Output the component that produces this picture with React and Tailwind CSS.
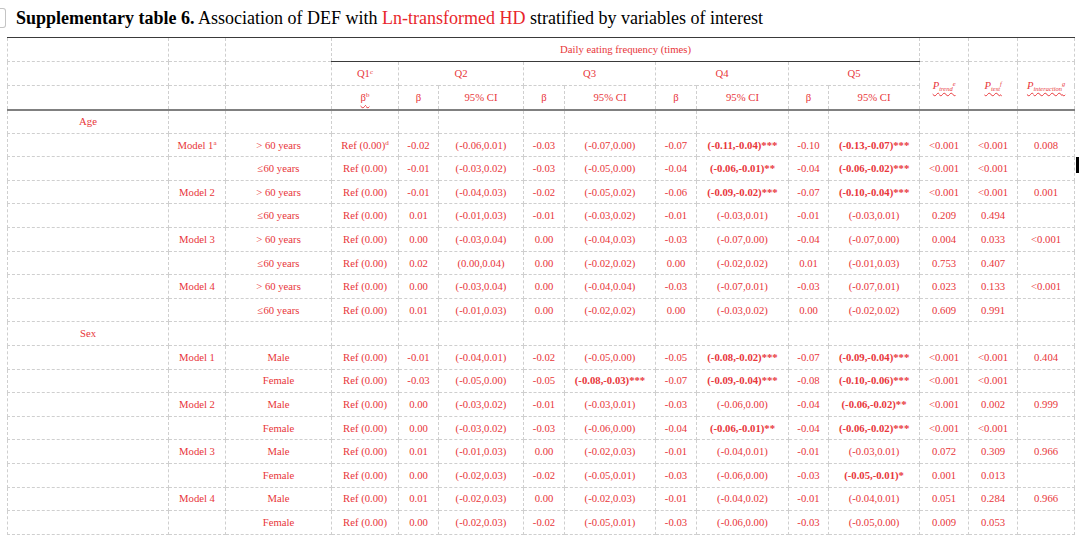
const rows = [
  { group: "Age" },
  { model: "Model 1", sup: "a", sub: "> 60 years", refSup: "d", v: ["-0.02", "(-0.06,0.01)", "-0.03", "(-0.07,0.00)", "-0.07", "!(-0.11,-0.04)***", "-0.10", "!(-0.13,-0.07)***", "<0.001", "<0.001", "0.008"] },
  { sub: "≤60 years", v: ["-0.01", "(-0.03,0.02)", "-0.03", "(-0.05,0.00)", "-0.04", "!(-0.06,-0.01)**", "-0.04", "!(-0.06,-0.02)***", "<0.001", "<0.001", ""] },
  { model: "Model 2", sub: "> 60 years", v: ["-0.01", "(-0.04,0.03)", "-0.02", "(-0.05,0.02)", "-0.06", "!(-0.09,-0.02)***", "-0.07", "!(-0.10,-0.04)***", "<0.001", "<0.001", "0.001"] },
  { sub: "≤60 years", v: ["0.01", "(-0.01,0.03)", "-0.01", "(-0.03,0.02)", "-0.01", "(-0.03,0.01)", "-0.01", "(-0.03,0.01)", "0.209", "0.494", ""] },
  { model: "Model 3", sub: "> 60 years", v: ["0.00", "(-0.03,0.04)", "0.00", "(-0.04,0.03)", "-0.03", "(-0.07,0.00)", "-0.04", "(-0.07,0.00)", "0.004", "0.033", "<0.001"] },
  { sub: "≤60 years", v: ["0.02", "(0.00,0.04)", "0.00", "(-0.02,0.02)", "0.00", "(-0.02,0.02)", "0.01", "(-0.01,0.03)", "0.753", "0.407", ""] },
  { model: "Model 4", sub: "> 60 years", v: ["0.00", "(-0.03,0.04)", "0.00", "(-0.04,0.04)", "-0.03", "(-0.07,0.01)", "-0.03", "(-0.07,0.01)", "0.023", "0.133", "<0.001"] },
  { sub: "≤60 years", v: ["0.01", "(-0.01,0.03)", "0.00", "(-0.02,0.02)", "0.00", "(-0.03,0.02)", "0.00", "(-0.02,0.02)", "0.609", "0.991", ""] },
  { group: "Sex" },
  { model: "Model 1", sub: "Male", v: ["-0.01", "(-0.04,0.01)", "-0.02", "(-0.05,0.00)", "-0.05", "!(-0.08,-0.02)***", "-0.07", "!(-0.09,-0.04)***", "<0.001", "<0.001", "0.404"] },
  { sub: "Female", v: ["-0.03", "(-0.05,0.00)", "-0.05", "!(-0.08,-0.03)***", "-0.07", "!(-0.09,-0.04)***", "-0.08", "!(-0.10,-0.06)***", "<0.001", "<0.001", ""] },
  { model: "Model 2", sub: "Male", v: ["0.00", "(-0.03,0.02)", "-0.01", "(-0.03,0.01)", "-0.03", "(-0.06,0.00)", "-0.04", "!(-0.06,-0.02)**", "<0.001", "0.002", "0.999"] },
  { sub: "Female", v: ["0.00", "(-0.03,0.02)", "-0.03", "(-0.06,0.00)", "-0.04", "!(-0.06,-0.01)**", "-0.04", "!(-0.06,-0.02)***", "<0.001", "<0.001", ""] },
  { model: "Model 3", sub: "Male", v: ["0.01", "(-0.01,0.03)", "0.00", "(-0.02,0.03)", "-0.01", "(-0.04,0.01)", "-0.01", "(-0.03,0.01)", "0.072", "0.309", "0.966"] },
  { sub: "Female", v: ["0.00", "(-0.02,0.03)", "-0.02", "(-0.05,0.01)", "-0.03", "(-0.06,0.00)", "-0.03", "!(-0.05,-0.01)*", "0.001", "0.013", ""] },
  { model: "Model 4", sub: "Male", v: ["0.01", "(-0.02,0.03)", "0.00", "(-0.02,0.03)", "-0.01", "(-0.04,0.02)", "-0.01", "(-0.04,0.01)", "0.051", "0.284", "0.966"] },
  { sub: "Female", v: ["0.00", "(-0.02,0.03)", "-0.02", "(-0.05,0.01)", "-0.03", "(-0.06,0.00)", "-0.03", "(-0.05,0.00)", "0.009", "0.053", ""] },
];

const widths = [161, 57, 106, 67, 40, 85, 41, 91, 41, 92, 40, 91, 49, 49, 57];

const serif = "font-['Liberation_Serif','Times_New_Roman',serif]";
const cell = "border border-dashed border-[#cfcfcf] text-center align-middle p-0 whitespace-nowrap";
const top = "[border-top:1px_solid_#3a3a3a]";
const bottom = "[border-bottom:2px_solid_#808080]";
const wavy = "underline decoration-wavy decoration-[#e8363a] decoration-1 underline-offset-[3px]";

function Val({ text }) {
  if (text.startsWith("!")) return <span className="font-bold">{text.slice(1)}</span>;
  return text;
}

function PHead({ sub, sup }) {
  return (
    <span className={"italic " + wavy}>
      P<sub className="text-[6.5px]">{sub}</sub>
      <sup className="text-[6.5px]">{sup}</sup>
    </span>
  );
}

export default function App() {
  return (
    <div className={"relative w-[1080px] h-[538px] overflow-hidden bg-white " + serif}>
      <div className="flex items-center h-[22px] mt-[7px]">
        <div className="w-[6px] h-[20px] border border-l-0 border-[#c4c4c4] rounded-r-[3px] mr-[10px]" />
        <h1 className="text-[18px] text-black leading-none">
          <span className="font-bold">Supplementary table 6.</span> Association of DEF with{" "}
          <span className="text-[#e8262b]">Ln-transformed HD</span> stratified by variables of interest
        </h1>
      </div>

      <table className={"mt-[8px] ml-[7px] w-[1067px] table-fixed border-collapse text-[10.7px] leading-none text-[#e8363a] " + serif}>
        <colgroup>
          {widths.map((w, i) => (
            <col key={i} style={{ width: w }} />
          ))}
        </colgroup>
        <thead>
          <tr className="h-[24px]">
            <td className={cell + " " + top} />
            <td className={cell + " " + top} />
            <td className={cell + " " + top} />
            <td colSpan={9} className={cell + " " + top + " [border-bottom:1px_solid_#3a3a3a]"}>
              Daily eating frequency (times)
            </td>
            <td className={cell + " " + top} />
            <td className={cell + " " + top} />
            <td className={cell + " " + top} />
          </tr>
          <tr className="h-[24px]">
            <td className={cell} />
            <td className={cell} />
            <td className={cell} />
            <td className={cell}>
              Q1<sup className="text-[7px]">c</sup>
            </td>
            <td colSpan={2} className={cell}>Q2</td>
            <td colSpan={2} className={cell}>Q3</td>
            <td colSpan={2} className={cell}>Q4</td>
            <td colSpan={2} className={cell}>Q5</td>
            <td rowSpan={2} className={cell + " " + bottom}>
              <PHead sub="trend" sup="e" />
            </td>
            <td rowSpan={2} className={cell + " " + bottom}>
              <PHead sub="test" sup="f" />
            </td>
            <td rowSpan={2} className={cell + " " + bottom}>
              <PHead sub="interaction" sup="g" />
            </td>
          </tr>
          <tr className="h-[24px]">
            <td className={cell + " " + bottom} />
            <td className={cell + " " + bottom} />
            <td className={cell + " " + bottom} />
            <td className={cell + " " + bottom}>
              <span className={wavy}>
                β<sup className="text-[7px]">b</sup>
              </span>
            </td>
            {["Q2", "Q3", "Q4", "Q5"].map((q) => [
              <td key={q + "b"} className={cell + " " + bottom}>β</td>,
              <td key={q + "c"} className={cell + " " + bottom}>95% CI</td>,
            ])}
          </tr>
        </thead>
        <tbody>
          {rows.map((r, i) =>
            r.group ? (
              <tr key={i} className="h-[23.6px]">
                <td className={cell}>{r.group}</td>
                {Array.from({ length: 14 }).map((_, j) => (
                  <td key={j} className={cell} />
                ))}
              </tr>
            ) : (
              <tr key={i} className="h-[23.6px]">
                <td className={cell} />
                <td className={cell}>
                  {r.model}
                  {r.sup && <sup className="text-[7px]">{r.sup}</sup>}
                </td>
                <td className={cell}>{r.sub}</td>
                <td className={cell}>
                  Ref (0.00)
                  {r.refSup && <sup className="text-[7px]">{r.refSup}</sup>}
                </td>
                {r.v.map((t, j) => (
                  <td key={j} className={cell}>
                    <Val text={t} />
                  </td>
                ))}
              </tr>
            )
          )}
        </tbody>
      </table>

      <div className="absolute left-[1076px] top-[157px] w-[3px] h-[16px] bg-black" />
    </div>
  );
}
